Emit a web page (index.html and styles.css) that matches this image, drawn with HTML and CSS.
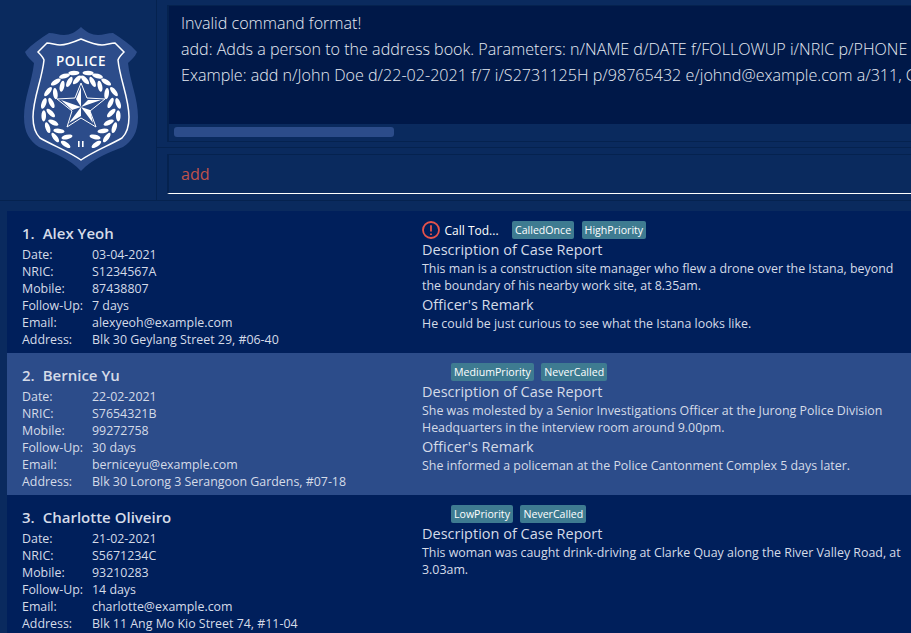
FILE: index.html
```html
<!DOCTYPE html>
<html lang="en">
<head>
    <meta charset="UTF-8">
    <title>Address Book</title>
    <link rel="stylesheet" href="styles.css">
</head>
<body>
    <header class="top">
        <div class="logo">
            <svg class="badge" viewBox="0 0 156 200" width="156" height="200">
                <defs>
                    <g id="leaves">
                        <ellipse cx="77" cy="147.5" rx="5.6" ry="2.3" transform="rotate(16 77 147.5)"></ellipse>
                        <ellipse cx="76" cy="140" rx="5.6" ry="2.3" transform="rotate(-30 76 140)"></ellipse>
                    </g>
                    <g id="wreath">
                        <use href="#leaves" transform="rotate(18 81 110)"></use>
                        <use href="#leaves" transform="rotate(37 81 110)"></use>
                        <use href="#leaves" transform="rotate(56 81 110)"></use>
                        <use href="#leaves" transform="rotate(75 81 110)"></use>
                        <use href="#leaves" transform="rotate(94 81 110)"></use>
                        <use href="#leaves" transform="rotate(113 81 110)"></use>
                        <use href="#leaves" transform="rotate(132 81 110)"></use>
                        <use href="#leaves" transform="rotate(148 81 110)"></use>
                        <use href="#leaves" transform="rotate(163 81 110)"></use>
                    </g>
                </defs>
                <path class="shield" d="M81 27 C86 32 92 35 98 35 C103 35 108 33 113 33 C121 38 130 44 137 52 C135 57 131 60 128 63 C130 82 138 98 138 117 C138 133 132 141 123 147 C108 153 92 159 81 171 C70 159 54 153 39 147 C30 141 24 133 24 117 C24 98 32 82 34 63 C31 60 27 57 25 52 C32 44 41 38 49 33 C54 33 59 35 64 35 C70 35 76 32 81 27 Z"></path>
                <path class="shield-line" d="M81 39 C88 42 95 45 102 45 C106 45 111 43 115 43 L124 52 C121 55 119 57 118 60 C120 80 129 98 129 117 C129 128 126 134 122 138 C108 146 94 151 81 160 C68 151 54 146 40 138 C36 134 33 128 33 117 C33 98 42 80 44 60 C43 57 41 55 38 52 L47 43 C51 43 56 45 60 45 C67 45 74 42 81 39 Z"></path>
                <text class="badge-text" x="81" y="66">POLICE</text>
                <g class="wreath">
                    <use href="#wreath"></use>
                    <use href="#wreath" transform="translate(162 0) scale(-1 1)"></use>
                    <rect x="78" y="141" width="1.6" height="6"></rect>
                    <rect x="82" y="141" width="1.6" height="6"></rect>
                </g>
                <polygon class="star" points="81,83 87,98 105,99 90,111 96,127 81,118 67,127 72,111 57,99 75,98"></polygon>
                <g class="wreath">
                    <polygon points="81,87 81,107 76,99"></polygon>
                    <polygon points="101,100 81,107 88,100"></polygon>
                    <polygon points="93,123 81,107 90,110"></polygon>
                    <polygon points="69,123 81,107 81,116"></polygon>
                    <polygon points="61,100 81,107 72,110"></polygon>
                </g>
            </svg>
        </div>
        <div class="console">
            <section class="result-pane">
                <div class="result-box">
                    <div class="result-text">
                        <p>Invalid command format!</p>
                        <p>add: Adds a person to the address book. Parameters: n/NAME d/DATE f/FOLLOWUP i/NRIC p/PHONE e/EMAIL a/ADDRESS</p>
                        <p>Example: add n/John Doe d/22-02-2021 f/7 i/S2731125H p/98765432 e/johnd@example.com a/311, Clementi Ave 2, #02-25</p>
                    </div>
                    <div class="scroll-track"><div class="scroll-thumb"></div></div>
                </div>
            </section>
            <section class="command-pane">
                <div class="command-box">add</div>
            </section>
        </div>
    </header>

    <main class="person-list">
        <article class="card">
            <div class="person">
                <h2 class="name"><span class="index">1.</span>Alex Yeoh</h2>
                <dl class="fields">
                    <dt>Date:</dt><dd>03-04-2021</dd>
                    <dt>NRIC:</dt><dd>S1234567A</dd>
                    <dt>Mobile:</dt><dd>87438807</dd>
                    <dt>Follow-Up:</dt><dd>7 days</dd>
                    <dt>Email:</dt><dd>alexyeoh@example.com</dd>
                    <dt>Address:</dt><dd>Blk 30 Geylang Street 29, #06-40</dd>
                </dl>
            </div>
            <div class="case">
                <div class="tags">
                    <svg class="alert" viewBox="0 0 18 18" width="18" height="18">
                        <circle cx="9" cy="9" r="8"></circle>
                        <path d="M9 4.2 V10.5 M9 12.4 V14"></path>
                    </svg>
                    <span class="call-today">Call Tod...</span>
                    <span class="tag">CalledOnce</span>
                    <span class="tag">HighPriority</span>
                </div>
                <h3 class="case-title">Description of Case Report</h3>
                <p class="case-text">This man is a construction site manager who flew a drone over the Istana, beyond the boundary of his nearby work site, at 8.35am.</p>
                <h3 class="case-title">Officer's Remark</h3>
                <p class="case-text">He could be just curious to see what the Istana looks like.</p>
            </div>
        </article>

        <article class="card selected">
            <div class="person">
                <h2 class="name"><span class="index">2.</span>Bernice Yu</h2>
                <dl class="fields">
                    <dt>Date:</dt><dd>22-02-2021</dd>
                    <dt>NRIC:</dt><dd>S7654321B</dd>
                    <dt>Mobile:</dt><dd>99272758</dd>
                    <dt>Follow-Up:</dt><dd>30 days</dd>
                    <dt>Email:</dt><dd>berniceyu@example.com</dd>
                    <dt>Address:</dt><dd>Blk 30 Lorong 3 Serangoon Gardens, #07-18</dd>
                </dl>
            </div>
            <div class="case">
                <div class="tags no-call">
                    <span class="tag">MediumPriority</span>
                    <span class="tag">NeverCalled</span>
                </div>
                <h3 class="case-title">Description of Case Report</h3>
                <p class="case-text">She was molested by a Senior Investigations Officer at the Jurong Police Division Headquarters in the interview room around 9.00pm.</p>
                <h3 class="case-title">Officer's Remark</h3>
                <p class="case-text">She informed a policeman at the Police Cantonment Complex 5 days later.</p>
            </div>
        </article>

        <article class="card">
            <div class="person">
                <h2 class="name"><span class="index">3.</span>Charlotte Oliveiro</h2>
                <dl class="fields">
                    <dt>Date:</dt><dd>21-02-2021</dd>
                    <dt>NRIC:</dt><dd>S5671234C</dd>
                    <dt>Mobile:</dt><dd>93210283</dd>
                    <dt>Follow-Up:</dt><dd>14 days</dd>
                    <dt>Email:</dt><dd>charlotte@example.com</dd>
                    <dt>Address:</dt><dd>Blk 11 Ang Mo Kio Street 74, #11-04</dd>
                </dl>
            </div>
            <div class="case">
                <div class="tags no-call">
                    <span class="tag">LowPriority</span>
                    <span class="tag">NeverCalled</span>
                </div>
                <h3 class="case-title">Description of Case Report</h3>
                <p class="case-text">This woman was caught drink-driving at Clarke Quay along the River Valley Road, at 3.03am.</p>
            </div>
        </article>
    </main>
</body>
</html>
```

FILE: styles.css
```css
html, body {
    margin: 0;
    height: 100%;
    overflow: hidden;
}
body {
    background-color: #0a2a5e;
    font-family: "Open Sans", "Noto Sans", sans-serif;
    font-size: 12.4px;
    color: #d5dbe8;
}
p, h2, h3, dl, dd {
    margin: 0;
}

.top {
    display: flex;
    height: 200px;
    border-bottom: 1px solid #05224f;
    box-sizing: content-box;
}
.logo {
    width: 156px;
    flex: none;
    border-right: 1px solid #05224f;
}
.badge {
    display: block;
}
.shield {
    fill: #2c4c8a;
}
.shield-line {
    fill: none;
    stroke: #fff;
    stroke-width: 1.5;
}
.badge-text {
    fill: #fff;
    font-size: 13.5px;
    font-weight: 600;
    letter-spacing: 0.6px;
    text-anchor: middle;
}
.wreath {
    fill: #fff;
}
.star {
    fill: #2c4c8a;
    stroke: #fff;
    stroke-width: 1;
}

.console {
    flex: 1;
    min-width: 0;
    display: flex;
    flex-direction: column;
}
.result-pane {
    height: 148px;
    padding: 5px 0 0 10px;
    box-sizing: border-box;
    border-bottom: 1px solid #05224f;
}
.result-box {
    height: 137px;
    border: 1px solid #05224f;
    border-left-width: 2px;
    border-right: 0;
    box-sizing: border-box;
}
.result-text {
    height: 118px;
    padding: 4px 0 0 12px;
    box-sizing: border-box;
    background-color: #001848;
    font-size: 16.1px;
    font-weight: 300;
    line-height: 26px;
    white-space: nowrap;
    overflow: hidden;
    color: #e6ebf3;
}
.scroll-track {
    padding: 3px 5px;
}
.scroll-thumb {
    width: 220px;
    height: 10px;
    border-radius: 3px;
    background-color: #2c4c8a;
}
.command-pane {
    flex: 1;
    padding: 6px 0 6px 10px;
}
.command-box {
    height: 40px;
    line-height: 39px;
    padding-left: 12px;
    box-sizing: border-box;
    border-top: 1px solid #05224f;
    border-left: 2px solid #05224f;
    border-bottom: 1px solid #fff;
    font-size: 16.1px;
    color: #c0524a;
}

.person-list {
    margin: 10px 0 0 7px;
}
.card {
    display: flex;
    height: 142px;
    background-color: #001f5b;
}
.card.selected {
    background-color: #2c4c8a;
}
.person {
    width: 400px;
    flex: none;
    padding: 10px 0 0 15px;
    box-sizing: border-box;
}
.name {
    font-size: 15px;
    font-weight: 600;
    line-height: 24px;
    margin-bottom: 1px;
}
.index {
    margin-right: 8px;
}
.fields {
    display: grid;
    grid-template-columns: 70px 1fr;
    line-height: 17px;
}
.case {
    flex: 1;
    padding: 10px 0 0 15px;
    min-width: 0;
}
.tags {
    display: flex;
    align-items: center;
    height: 18px;
    gap: 7.5px;
}
.tags.no-call {
    padding-left: 29px;
}
.alert {
    flex: none;
    margin-right: -3px;
}
.alert circle, .alert path {
    fill: none;
    stroke: #e5534b;
    stroke-width: 1.8;
}
.call-today {
    width: 60px;
    color: #fff;
    font-size: 12px;
}
.tag {
    height: 18px;
    line-height: 18px;
    padding: 0 3px;
    border-radius: 2px;
    background-color: #3e7b91;
    font-size: 10.6px;
    color: #fff;
}
.case-title {
    font-size: 14.5px;
    font-weight: 400;
    line-height: 21px;
}
.case-text {
    line-height: 17px;
    padding-right: 5px;
}
```
